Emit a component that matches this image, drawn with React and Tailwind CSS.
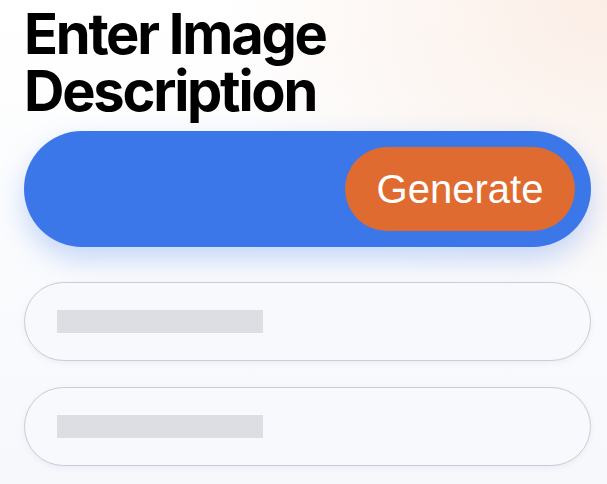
export default function App() {
  return (
    <div className="w-[607px] h-[484px] overflow-hidden bg-[radial-gradient(ellipse_at_100%_0%,#fbeee6_0%,rgba(251,238,230,0)_45%),linear-gradient(180deg,#ffffff_0%,#f6f8fc_100%)] pl-6 pr-4 pt-[6px] font-['Liberation_Sans',Arial,sans-serif]">
      {/* heading */}
      <h1 className="font-['Inter',sans-serif] text-[56px] leading-[57px] font-bold tracking-[-0.04em] text-black">
        Enter Image
        <br />
        Description
      </h1>

      {/* prompt bar */}
      <div className="mt-[11px] flex h-[116px] items-center justify-end rounded-full bg-[#3b77e8] pr-4 shadow-[0_12px_28px_rgba(59,119,232,0.28)]">
        <button className="flex h-[84px] w-[230px] items-center justify-center rounded-full bg-[#df6b31] text-[40px] font-normal text-white">
          Generate
        </button>
      </div>

      {/* placeholder inputs */}
      <div className="mt-[35px] flex flex-col gap-[26px]">
        {[0, 1].map((i) => (
          <div
            key={i}
            className="flex h-[79px] items-center rounded-full border border-[#c9ccd8] bg-[#f8f9fc] pl-[32px] shadow-[0_2px_6px_rgba(150,160,190,0.12)]"
          >
            <div className="h-[23px] w-[206px] bg-[#dcdee3]" />
          </div>
        ))}
      </div>
    </div>
  );
}
